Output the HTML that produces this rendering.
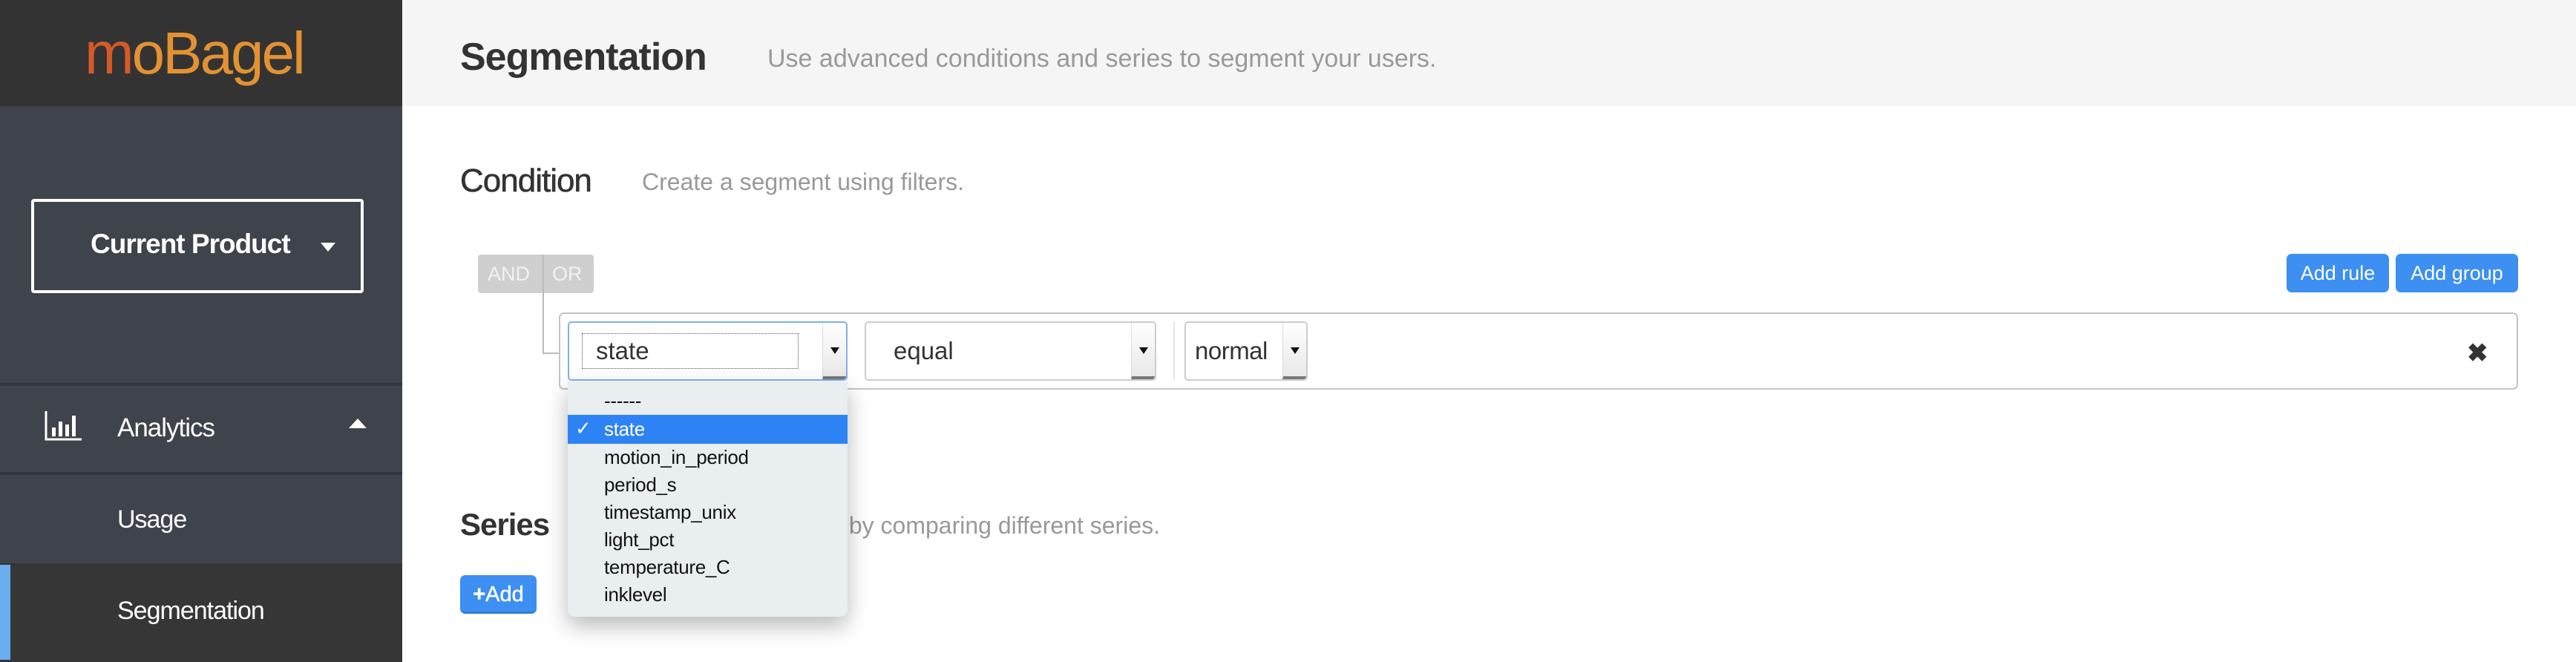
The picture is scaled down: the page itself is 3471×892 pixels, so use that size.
<!DOCTYPE html>
<html><head><meta charset="utf-8"><style>
*{margin:0;padding:0;box-sizing:border-box}
body{width:3471px;height:892px;background:#fff;font-family:"Liberation Sans",Arial,sans-serif;position:relative;overflow:hidden}
.a{position:absolute}
.side{left:0;top:0;width:542px;height:892px;background:#3f434b}
.logo{left:0;top:0;width:542px;height:143px;background:#333}
.hdr{left:542px;top:0;width:2929px;height:143px;background:#f5f5f5}
.sel{background:#fff;border:2px solid #ccc;border-radius:5px}
.sel .arr{position:absolute;right:0;top:0;bottom:0;width:32px;background:linear-gradient(#fff,#e8e8e8);border-left:1px solid #ddd;border-bottom:4px solid #777;border-radius:0 4px 4px 0}
.sel .arr:after{content:"";position:absolute;left:10px;top:33px;border:6px solid transparent;border-top:9px solid #111;border-bottom:0}
.item{position:absolute;left:814px;font-size:26px;color:#111;letter-spacing:-0.3px}
.btn{background:#3d8ff1;color:#fff;border-radius:7px;font-size:27px;text-align:center}
</style></head><body>
<div class="a side"></div>
<div class="a logo"></div>
<div class="a" style="left:114px;top:26px;font-size:80px;color:#e39233;letter-spacing:-3px;font-family:'Liberation Sans',sans-serif"><span style="color:#d65a28">m</span>oBagel</div>
<div class="a" style="left:42px;top:268px;width:448px;height:127px;border:4px solid #fff;border-radius:4px"></div>
<div class="a" style="left:122px;top:308px;font-size:37px;font-weight:bold;color:#fff;letter-spacing:-1px">Current Product</div>
<div class="a" style="left:432px;top:327px;border:10px solid transparent;border-top:12px solid #fff;border-bottom:0"></div>
<div class="a" style="left:0;top:516px;width:542px;height:4px;background:#33363c"></div>
<svg class="a" style="left:60px;top:554px" width="52" height="40"><path d="M2 0V38H50" stroke="#fff" stroke-width="3" fill="none"/><rect x="10" y="22" width="5" height="12" fill="#fff"/><rect x="19" y="14" width="5" height="20" fill="#fff"/><rect x="28" y="18" width="5" height="16" fill="#fff"/><rect x="37" y="6" width="5" height="28" fill="#fff"/></svg>
<div class="a" style="left:158px;top:557px;font-size:35px;color:#fff;letter-spacing:-1px">Analytics</div>
<div class="a" style="left:470px;top:564px;border:12px solid transparent;border-bottom:13px solid #fff;border-top:0"></div>
<div class="a" style="left:0;top:636px;width:542px;height:4px;background:#33363c"></div>
<div class="a" style="left:158px;top:681px;font-size:34px;color:#fff;letter-spacing:-1px">Usage</div>
<div class="a" style="left:0;top:759px;width:542px;height:133px;background:#363636"></div>
<div class="a" style="left:0;top:761px;width:14px;height:128px;background:#6aaef0"></div>
<div class="a" style="left:158px;top:804px;font-size:34px;color:#fff;letter-spacing:-1px">Segmentation</div>
<div class="a hdr"></div>
<div class="a" style="left:620px;top:47px;font-size:52px;font-weight:bold;color:#333;letter-spacing:-1px">Segmentation</div>
<div class="a" style="left:1034px;top:60px;font-size:34px;color:#999">Use advanced conditions and series to segment your users.</div>
<div class="a" style="left:620px;top:219px;font-size:44px;color:#333;letter-spacing:-1px;-webkit-text-stroke:0.6px #333">Condition</div>
<div class="a" style="left:865px;top:227px;font-size:32px;color:#999">Create a segment using filters.</div>
<div class="a" style="left:644px;top:343px;width:156px;height:52px;background:#cfcfcf;border-radius:4px"></div>
<div class="a" style="left:731px;top:343px;width:2px;height:134px;background:#bbb"></div>
<div class="a" style="left:731px;top:475px;width:24px;height:2px;background:#bbb"></div>
<div class="a" style="left:657px;top:354px;font-size:27px;color:#f2f2f2">AND</div>
<div class="a" style="left:744px;top:354px;font-size:27px;color:#f2f2f2">OR</div>
<div class="a btn" style="left:3081px;top:342px;width:138px;height:52px;line-height:52px">Add rule</div>
<div class="a btn" style="left:3228px;top:342px;width:165px;height:52px;line-height:52px">Add group</div>
<div class="a" style="left:753px;top:421px;width:2640px;height:104px;border:2px solid #c4c4c4;border-radius:7px"></div>
<div class="a sel" style="left:765px;top:433px;width:377px;height:80px;border-color:#7fb1e8"><div class="arr"></div></div>
<div class="a" style="left:784px;top:449px;width:292px;height:48px;border:1px dotted #555"></div>
<div class="a" style="left:803px;top:454px;font-size:33px;color:#333">state</div>
<div class="a sel" style="left:1165px;top:433px;width:393px;height:80px"><div class="arr"></div></div>
<div class="a" style="left:1204px;top:454px;font-size:33px;color:#333">equal</div>
<div class="a" style="left:1581px;top:434px;width:2px;height:78px;background:#e4e4e4"></div>
<div class="a sel" style="left:1596px;top:433px;width:166px;height:80px"><div class="arr"></div></div>
<div class="a" style="left:1610px;top:454px;font-size:33px;color:#333;letter-spacing:-0.5px">normal</div>
<div class="a" style="left:3324px;top:456px;font-size:34px;font-weight:bold;color:#333">✖</div>
<div class="a" style="left:620px;top:683px;font-size:42px;font-weight:bold;color:#333;letter-spacing:-1px">Series</div>
<div class="a" style="right:1908px;top:690px;font-size:32px;color:#999;text-align:right;white-space:nowrap">ate a segment by comparing different series.</div>
<div class="a btn" style="left:620px;top:775px;width:103px;height:52px;line-height:52px;font-size:29px;border-bottom:3px solid #2f7fd8;-webkit-text-stroke:0.5px #fff"><b>+</b>Add</div>
<div class="a" style="left:765px;top:514px;width:377px;height:317px;background:#e9eef0;border-radius:0 0 10px 10px;box-shadow:0 12px 30px rgba(0,0,0,.28)"></div>
<div class="a" style="left:765px;top:559px;width:377px;height:39px;background:#2d83f3"></div>
<div class="item" style="top:525px">------</div>
<div class="a" style="left:775px;top:562px;font-size:26px;color:#fff">✓</div>
<div class="item" style="top:563px;color:#fff">state</div>
<div class="item" style="top:601px">motion_in_period</div>
<div class="item" style="top:638px">period_s</div>
<div class="item" style="top:675px">timestamp_unix</div>
<div class="item" style="top:712px">light_pct</div>
<div class="item" style="top:749px">temperature_C</div>
<div class="item" style="top:786px">inklevel</div>
</body></html>
